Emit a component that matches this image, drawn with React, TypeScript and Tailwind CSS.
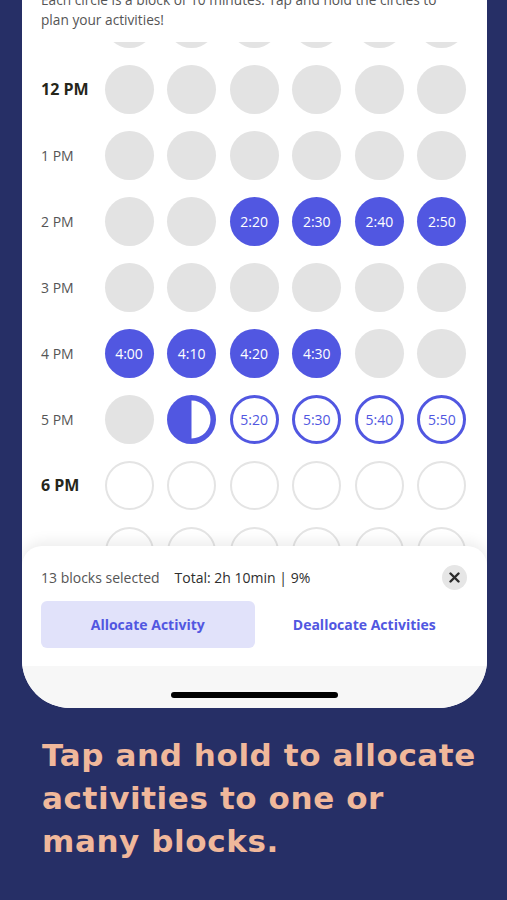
import React from "react";

const INDIGO = "#5157e1";

type Cell = { kind: "gray" | "fill" | "outline" | "empty" | "half"; label?: string };

const g: Cell = { kind: "gray" };
const e: Cell = { kind: "empty" };

const rows: { label: string; bold?: boolean; cells: Cell[] }[] = [
  { label: "11 AM", cells: [g, g, g, g, g, g] },
  { label: "12 PM", bold: true, cells: [g, g, g, g, g, g] },
  { label: "1 PM", cells: [g, g, g, g, g, g] },
  {
    label: "2 PM",
    cells: [g, g, { kind: "fill", label: "2:20" }, { kind: "fill", label: "2:30" }, { kind: "fill", label: "2:40" }, { kind: "fill", label: "2:50" }],
  },
  { label: "3 PM", cells: [g, g, g, g, g, g] },
  {
    label: "4 PM",
    cells: [{ kind: "fill", label: "4:00" }, { kind: "fill", label: "4:10" }, { kind: "fill", label: "4:20" }, { kind: "fill", label: "4:30" }, g, g],
  },
  {
    label: "5 PM",
    cells: [g, { kind: "half" }, { kind: "outline", label: "5:20" }, { kind: "outline", label: "5:30" }, { kind: "outline", label: "5:40" }, { kind: "outline", label: "5:50" }],
  },
  { label: "6 PM", bold: true, cells: [e, e, e, e, e, e] },
  { label: "7 PM", cells: [e, e, e, e, e, e] },
];

function Circle({ c }: { c: Cell }) {
  if (c.kind === "half") {
    return (
      <svg width="49" height="49" viewBox="0 0 49 49" className="shrink-0">
        <circle cx="24.5" cy="24.5" r="24.5" fill={INDIGO} />
        <path d="M24.5 5.5 A19 19 0 0 1 24.5 43.5 Z" fill="#ffffff" />
      </svg>
    );
  }
  if (c.kind === "fill") {
    return (
      <div className="w-[49px] h-[49px] shrink-0 rounded-full bg-[#5157e1] flex items-center justify-center text-white text-[14px] font-medium">
        {c.label}
      </div>
    );
  }
  if (c.kind === "outline") {
    return (
      <div className="w-[49px] h-[49px] shrink-0 rounded-full border-[3px] border-[#5157e1] bg-white flex items-center justify-center text-[#5157e1] text-[14px] font-medium">
        {c.label}
      </div>
    );
  }
  if (c.kind === "empty") {
    return <div className="w-[49px] h-[49px] shrink-0 rounded-full border-2 border-[#e4e4e4] bg-white" />;
  }
  return <div className="w-[49px] h-[49px] shrink-0 rounded-full bg-[#e3e3e3]" />;
}

export default function App() {
  return (
    <div
      className="w-[507px] h-[900px] bg-[#262f66] flex flex-col overflow-hidden"
      style={{ fontFamily: '"Open Sans", "Noto Sans", sans-serif' }}
    >
      <div className="ml-[22px] w-[465px] h-[708px] shrink-0 bg-white rounded-b-[48px] overflow-hidden relative flex flex-col">
        <p className="mt-[-10px] px-[19px] text-[13.7px] leading-[20px] text-[#555555] h-[52px] whitespace-nowrap">
          Each circle is a block of 10 minutes. Tap and hold the circles to
          <br />
          plan your activities!
        </p>
        <div className="flex-1 overflow-hidden">
          <div className="mt-[-52px] flex flex-col">
            {rows.map((r) => (
              <div key={r.label} className="h-[66px] flex items-center pl-[19px]">
                <div
                  className={
                    r.bold
                      ? "w-[63.5px] shrink-0 text-[16px] font-bold text-[#26261a]"
                      : "w-[63.5px] shrink-0 text-[14px] text-[#555555]"
                  }
                >
                  {r.label}
                </div>
                <div className="flex gap-[13.6px]">
                  {r.cells.map((c, i) => (
                    <Circle key={i} c={c} />
                  ))}
                </div>
              </div>
            ))}
          </div>
        </div>

        {/* bottom sheet */}
        <div className="absolute left-0 right-0 top-[546px] bottom-0 flex flex-col">
          <div className="h-[120px] shrink-0 bg-white rounded-t-[20px] shadow-[0_-4px_14px_rgba(0,0,0,0.08)] px-[19px] pt-[16px]">
            <div className="flex items-center h-[30px]">
              <span className="text-[14px] text-[#555555]">13 blocks selected</span>
              <span className="ml-[15px] text-[14px] font-medium text-[#2e2e2e]">Total: 2h 10min | 9%</span>
              <button className="ml-auto mr-[1px] w-[25px] h-[25px] rounded-full bg-[#e6e6e6] flex items-center justify-center">
                <svg width="11" height="11" viewBox="0 0 11 11">
                  <path d="M1.5 1.5 L9.5 9.5 M9.5 1.5 L1.5 9.5" stroke="#2b2b2b" strokeWidth="2.4" strokeLinecap="round" />
                </svg>
              </button>
            </div>
            <div className="mt-[9px] grid grid-cols-2">
              <button className="h-[47px] rounded-[6px] bg-[#e1e2fa] text-[#5157e1] text-[14px] font-bold">
                Allocate Activity
              </button>
              <button className="h-[47px] pl-[6px] text-[#5157e1] text-[14px] font-bold">Deallocate Activities</button>
            </div>
          </div>
          <div className="flex-1 bg-[#f7f7f7] flex items-end justify-center pb-[10px]">
            <div className="w-[167px] h-[6px] rounded-full bg-black" />
          </div>
        </div>
      </div>

      <h1
        className="mt-[26px] pl-[42px] text-[31px] leading-[43px] tracking-[0.6px] font-bold text-[#f0b89b] whitespace-nowrap"
        style={{ fontFamily: '"DejaVu Sans", "Open Sans", sans-serif' }}
      >
        Tap and hold to allocate
        <br />
        activities to one or
        <br />
        many blocks.
      </h1>
    </div>
  );
}
